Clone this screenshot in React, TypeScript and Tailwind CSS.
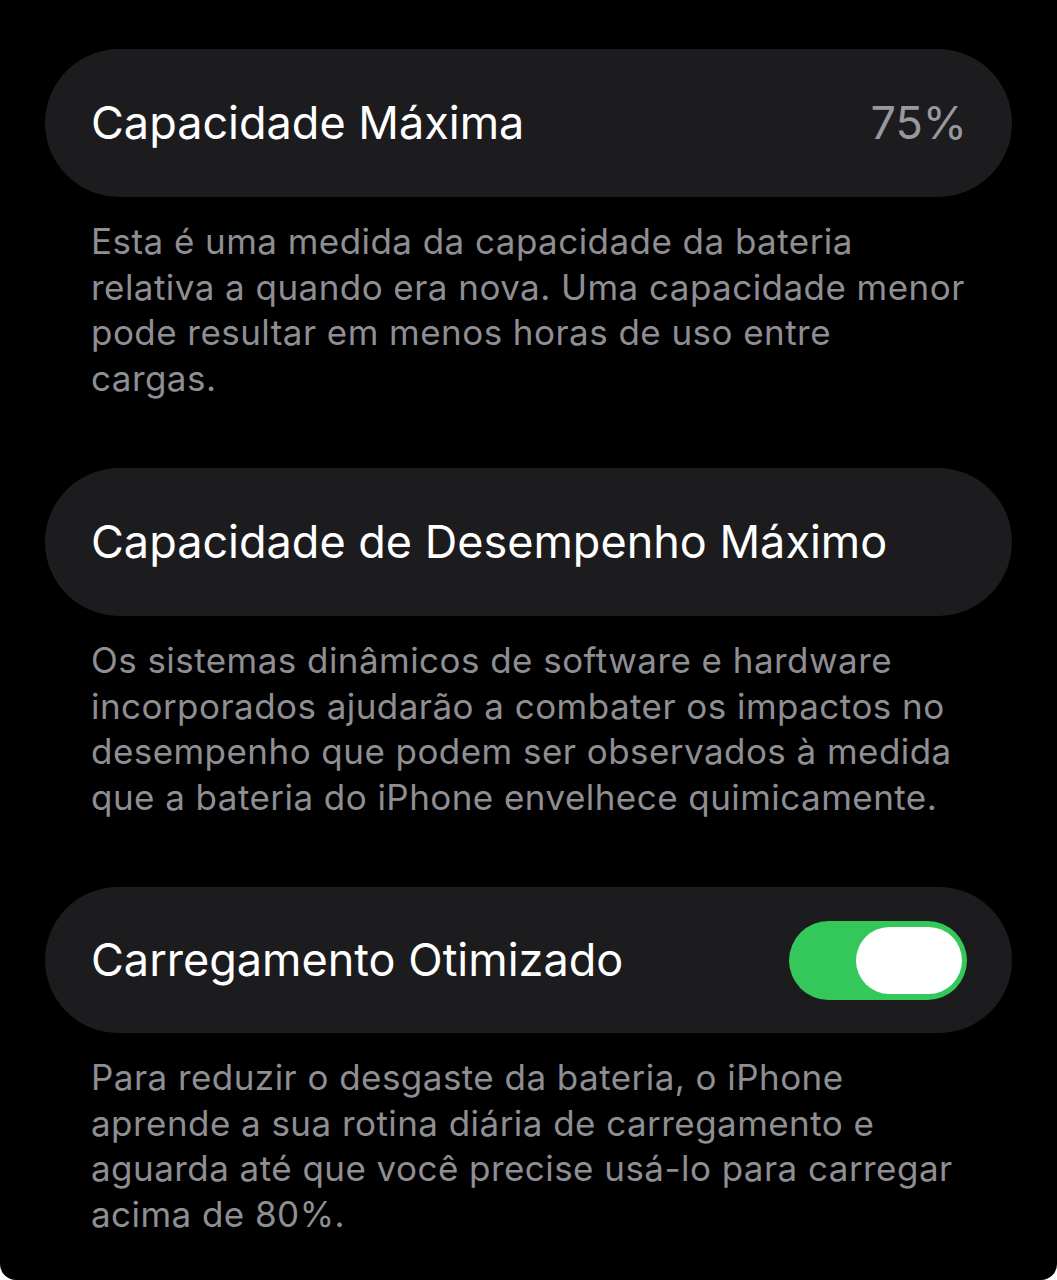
import React from 'react';

const font = { fontFamily: 'Inter, "Noto Sans", sans-serif' };

const Description = ({ lines }: { lines: string[] }) => (
    <p className="pl-[46px] mt-[22px] text-[35px] leading-[45.5px] text-[#8e8e93] tracking-[0.45px]">
        {lines.map((l, i) => (
            <span key={i} className="block whitespace-nowrap">{l}</span>
        ))}
    </p>
);

const Toggle = ({ on }: { on: boolean }) => (
    <div className={`w-[178px] h-[79px] rounded-full flex items-center pr-[5px] ${on ? 'bg-[#34c759] justify-end' : 'bg-[#39393d] justify-start'}`}>
        <div className="w-[106px] h-[67px] rounded-full bg-white" />
    </div>
);

export default function App() {
    return (
        <div className="w-full h-[1280px] bg-white" style={font}>
            <div className="h-full bg-black rounded-b-[16px] px-[45px] pt-[49px]">
                <div className="h-[148px] rounded-full bg-[#1c1c1e] flex items-center justify-between pl-[46px] pr-[45px]">
                    <span className="text-[45px] text-white">Capacidade Máxima</span>
                    <span className="text-[45px] text-[#98989e]">75%</span>
                </div>
                <Description lines={[
                    'Esta é uma medida da capacidade da bateria',
                    'relativa a quando era nova. Uma capacidade menor',
                    'pode resultar em menos horas de uso entre',
                    'cargas.',
                ]} />

                <div className="mt-[67px] h-[148px] rounded-full bg-[#1c1c1e] flex items-center pl-[46px] pr-[48px]">
                    <span className="text-[45px] text-white">Capacidade de Desempenho Máximo</span>
                </div>
                <Description lines={[
                    'Os sistemas dinâmicos de software e hardware',
                    'incorporados ajudarão a combater os impactos no',
                    'desempenho que podem ser observados à medida',
                    'que a bateria do iPhone envelhece quimicamente.',
                ]} />

                <div className="mt-[67px] h-[146px] rounded-full bg-[#1c1c1e] flex items-center justify-between pl-[46px] pr-[45px]">
                    <span className="text-[45px] text-white">Carregamento Otimizado</span>
                    <Toggle on />
                </div>
                <Description lines={[
                    'Para reduzir o desgaste da bateria, o iPhone',
                    'aprende a sua rotina diária de carregamento e',
                    'aguarda até que você precise usá-lo para carregar',
                    'acima de 80%.',
                ]} />
            </div>
        </div>
    );
}
